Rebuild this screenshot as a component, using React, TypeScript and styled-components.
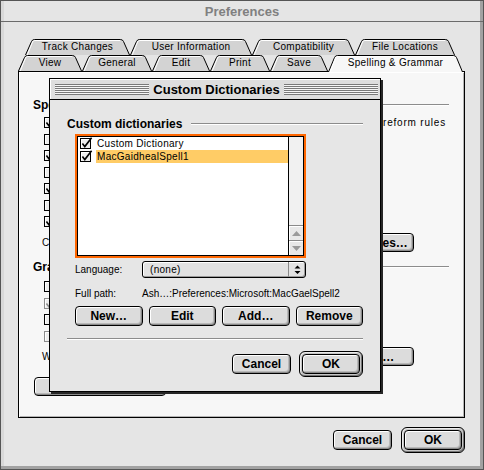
import React from 'react';
import styled, { createGlobalStyle } from 'styled-components';

const SYSTEM = `'Liberation Sans', Arial, sans-serif`;
const PANEL = '#f7f7f7';
const DISABLED = '#8c8c8c';

const GlobalStyle = createGlobalStyle`
  * { box-sizing: border-box; }
  html, body { margin: 0; padding: 0; }
  body { background: #ffffff; font-family: ${SYSTEM}; color: #000; }
`;

const Window = styled.div`
  position: relative;
  width: 484px;
  height: 470px;
  display: flex;
  flex-direction: column;
  background: #e5e5e5;
  border: 1px solid #555;
  box-shadow: inset -3px -3px 0 #a2a2a2, inset 3px 0 0 #d8d8d8;
`;

const TitleBar = styled.div`
  flex: none;
  height: 21px;
  display: flex;
  align-items: center;
  justify-content: center;
  border-bottom: 1px solid #6b6b6b;
  font: bold 13px ${SYSTEM};
  color: #808080;
`;

const Body = styled.div`
  display: flex;
  flex-direction: column;
  padding: 17px 0 0 17px;
`;

const TabRow = styled.div<{ $indent: number }>`
  display: flex;
  height: 16px;
  margin-left: ${p => p.$indent}px;
`;

const TabItem = styled.div<{ $w: number; $selected?: boolean }>`
  display: grid;
  width: ${p => p.$w}px;
  height: ${p => (p.$selected ? 17 : 16)}px;
  position: relative;
  z-index: ${p => (p.$selected ? 2 : 1)};

  & > * {
    grid-area: 1 / 1;
  }
`;

const TabSvg = styled.svg`
  display: block;
`;

const TabLabel = styled.span<{ $selected?: boolean }>`
  align-self: center;
  justify-self: center;
  font-size: 10px;
  line-height: 12px;
  letter-spacing: 0.3px;
  padding-bottom: ${p => (p.$selected ? 1 : 0)}px;
  white-space: nowrap;
`;

const Panel = styled.div`
  width: 447px;
  height: 347px;
  display: flex;
  flex-direction: column;
  padding: 26px 15px 0 14px;
  background: ${PANEL};
  border: 1px solid #000;
  box-shadow: inset 1px 1px 0 #fff, inset -1px -1px 0 #b4b4b4;
`;

const SectionHeader = styled.div<{ $gap?: number }>`
  display: flex;
  align-items: center;
  height: 14px;
  margin-top: ${p => p.$gap ?? 0}px;
`;

const SectionTitle = styled.span`
  font: bold 12px ${SYSTEM};
  white-space: nowrap;
`;

const Rule = styled.div<{ $inset?: number }>`
  flex: 1;
  height: 2px;
  margin-left: ${p => p.$inset ?? 6}px;
  border-top: 1px solid #8c8c8c;
  border-bottom: 1px solid #fff;
`;

const Options = styled.div<{ $gap: number }>`
  display: flex;
  flex-direction: column;
  margin-top: ${p => p.$gap}px;
  padding-left: 11px;
`;

const Option = styled.div<{ $disabled?: boolean }>`
  display: flex;
  align-items: center;
  gap: 5px;
  height: 16.5px;
  font-size: 10px;
  white-space: nowrap;
  color: ${p => (p.$disabled ? DISABLED : '#000')};
`;

const SideOption = styled.div`
  display: flex;
  align-items: center;
  gap: 5px;
  margin-left: auto;
  padding-right: 3px;
  letter-spacing: 0.8px;
`;

const FieldRow = styled.div<{ $gap: number }>`
  display: flex;
  align-items: center;
  height: 20px;
  margin-top: ${p => p.$gap}px;
  padding-left: 9px;
  font-size: 10px;
`;

const FieldLabel = styled.span<{ $w?: number }>`
  flex: none;
  width: ${p => (p.$w ? `${p.$w}px` : 'auto')};
  font-size: 10px;
  white-space: nowrap;
`;

const Button = styled.button<{ $w: number; $h?: number }>`
  flex: none;
  width: ${p => p.$w}px;
  height: ${p => p.$h ?? 20}px;
  padding: 0;
  border: 1px solid #000;
  border-radius: 4px;
  background: #dcdcdc;
  box-shadow: inset 1px 1px 0 #fff, inset -1px -1px 0 #8a8a8a,
    inset -2px -2px 0 #b8b8b8;
  font: bold 12px ${SYSTEM};
  color: #000;
  white-space: nowrap;
  overflow: hidden;
`;

const DefaultRing = styled.div`
  flex: none;
  padding: 2px;
  border: 1px solid #000;
  border-radius: 6px;
  background: #c6c6c6;
  box-shadow: inset 1px 1px 0 #ececec, inset -1px -1px 0 #777;
`;

const SideButton = styled(Button)`
  margin-left: auto;
  margin-right: 35px;
`;

const WideButton = styled(Button)`
  margin: 10.5px 0 0 1px;
`;

const Popup = styled.div<{ $w: number; $h?: number }>`
  flex: none;
  display: flex;
  width: ${p => p.$w}px;
  height: ${p => p.$h ?? 17}px;
  border: 1px solid #000;
  border-radius: 3px;
  background: #e2e2e2;
  box-shadow: inset 1px 1px 0 #fff, inset -1px -1px 0 #9a9a9a;
`;

const PopupValue = styled.span`
  flex: 1;
  display: flex;
  align-items: center;
  padding-left: 7px;
  font-size: 10px;
  letter-spacing: 0.3px;
  white-space: nowrap;
  overflow: hidden;
`;

const PopupArrowBox = styled.span`
  flex: none;
  width: 17px;
  display: flex;
  align-items: center;
  justify-content: center;
  border-left: 1px solid #8a8a8a;
`;

const Footer = styled.div`
  width: 447px;
  height: 26px;
  margin-top: 9px;
  display: flex;
  align-items: center;
  justify-content: flex-end;
  gap: 9px;
`;

/* movable modal dialog */

const Dialog = styled.div`
  position: absolute;
  left: 48px;
  top: 77px;
  width: 332px;
  height: 314px;
  display: flex;
  flex-direction: column;
  background: #e6e6e6;
  border: 1px solid #000;
  box-shadow: 2px 2px 0 #262626;
`;

const DialogTitleBar = styled.div`
  flex: none;
  height: 21px;
  display: flex;
  align-items: center;
  gap: 4px;
  padding: 0 2px 0 5px;
  background: #dedede;
  border-bottom: 1px solid #000;
  box-shadow: inset 1px 1px 0 #fff;
`;

const Stripes = styled.div`
  flex: 1;
  height: 11px;
  background: repeating-linear-gradient(
    to bottom,
    #7a7a7a 0 1px,
    #f6f6f6 1px 2px
  );
`;

const DialogTitle = styled.span`
  font: bold 13px ${SYSTEM};
  white-space: nowrap;
`;

const DialogBody = styled.div`
  flex: 1;
  display: flex;
  flex-direction: column;
  padding: 17px 17px 0;
`;

const Indented = styled.div`
  display: flex;
  flex-direction: column;
  padding-left: 8px;
`;

const FocusRing = styled.div`
  width: 231px;
  height: 124px;
  margin-top: 3px;
  border: 2px solid #ff6600;
`;

const ListBox = styled.div`
  height: 100%;
  display: flex;
  background: #fff;
  border: 1px solid #000;
`;

const ListRows = styled.div`
  flex: 1;
  display: flex;
  flex-direction: column;
`;

const ListRow = styled.div`
  display: flex;
  align-items: center;
  gap: 3px;
  height: 13px;
  padding-left: 2px;
`;

const ListLabel = styled.span<{ $selected?: boolean }>`
  flex: 1;
  height: 13px;
  line-height: 13px;
  padding-left: 1px;
  font-size: 10px;
  letter-spacing: 0.3px;
  background: ${p => (p.$selected ? '#ffcc66' : 'transparent')};
  white-space: nowrap;
`;

const ScrollTrack = styled.div`
  flex: none;
  width: 15px;
  display: flex;
  flex-direction: column;
  justify-content: flex-end;
  border-left: 1px solid #000;
  background: #f1f1f1;
`;

const ScrollArrow = styled.div`
  height: 15px;
  display: flex;
  align-items: center;
  justify-content: center;
  border-top: 1px solid #8a8a8a;
  background: #e8e8e8;
  box-shadow: inset 1px 1px 0 #fff;
`;

const DialogField = styled.div<{ $gap: number; $h: number }>`
  display: flex;
  align-items: center;
  height: ${p => p.$h}px;
  margin-top: ${p => p.$gap}px;
`;

const PathText = styled.span`
  font-size: 10px;
  white-space: nowrap;
`;

const ButtonGrid = styled.div`
  display: grid;
  grid-template-columns: repeat(4, 1fr);
  gap: 6px;
  margin-top: 5px;
`;

const Separator = styled.div`
  height: 2px;
  margin-top: 12px;
  border-top: 1px solid #8c8c8c;
  border-bottom: 1px solid #fff;
`;

const DialogActions = styled.div`
  display: flex;
  align-items: center;
  justify-content: flex-end;
  gap: 8px;
  height: 26px;
  margin-top: 11px;
`;

const GridButton = styled(Button)`
  width: auto;
`;

const CheckBox = ({ checked, disabled }: { checked?: boolean; disabled?: boolean }) => {
  const ink = disabled ? DISABLED : '#000';
  return (
    <svg width="13" height="13" viewBox="0 0 13 13" style={{ flex: 'none', display: 'block' }}>
      <rect x="0.5" y="1.5" width="10" height="10" fill="#eeeeee" stroke={ink} />
      <path d="M1.5 10.5 V2.5 H9.5" fill="none" stroke="#fff" />
      {checked && (
        <path d="M2.4 6.6 L4.8 9.6 L11.6 0.8" fill="none" stroke={ink} strokeWidth="1.6" />
      )}
    </svg>
  );
};

const TabShape = ({ w, h, selected }: { w: number; h: number; selected?: boolean }) => {
  const outline = `M0.5 ${h} L6.5 2.5 Q7.3 0.5 9.5 0.5 H${w - 9.5} Q${w - 7.3} 0.5 ${w - 6.5} 2.5 L${w - 0.5} ${h}`;
  const shine = `M2.2 ${h} L7.6 3 Q8.2 1.5 9.8 1.5 H${w - 10}`;
  return (
    <TabSvg width={w} height={h} viewBox={`0 0 ${w} ${h}`}>
      <path d={outline} fill={selected ? PANEL : '#d3d3d3'} stroke="#000" />
      <path d={shine} fill="none" stroke="#fff" />
    </TabSvg>
  );
};

type TabSpec = { label: string; width: number; selected?: boolean };

const backTabs: TabSpec[] = [
  { label: 'Track Changes', width: 105 },
  { label: 'User Information', width: 122 },
  { label: 'Compatibility', width: 103 },
  { label: 'File Locations', width: 100 },
];

const frontTabs: TabSpec[] = [
  { label: 'View', width: 64 },
  { label: 'General', width: 70 },
  { label: 'Edit', width: 58 },
  { label: 'Print', width: 60 },
  { label: 'Save', width: 58 },
  { label: 'Spelling & Grammar', width: 135, selected: true },
];

const Tabs = ({ tabs, indent }: { tabs: TabSpec[]; indent: number }) => (
  <TabRow $indent={indent}>
    {tabs.map(t => (
      <TabItem key={t.label} $w={t.width} $selected={t.selected}>
        <TabShape w={t.width} h={t.selected ? 17 : 16} selected={t.selected} />
        <TabLabel $selected={t.selected}>{t.label}</TabLabel>
      </TabItem>
    ))}
  </TabRow>
);

const PopupArrows = () => (
  <svg width="7" height="10" viewBox="0 0 7 10" style={{ display: 'block' }}>
    <path d="M3.5 0.5 L6.5 3.5 H0.5 Z M0.5 6 H6.5 L3.5 9 Z" fill="#000" />
  </svg>
);

const ScrollGlyph = ({ up }: { up?: boolean }) => (
  <svg width="9" height="5" viewBox="0 0 9 5" style={{ display: 'block' }}>
    <path d={up ? 'M4.5 0 L9 5 H0 Z' : 'M0 0 H9 L4.5 5 Z'} fill="#9a9a9a" />
  </svg>
);

const spellingOptions = [
  { label: 'Check spelling as you type', checked: true },
  { label: 'Hide spelling errors in this document' },
  { label: 'Always suggest corrections', checked: true },
  { label: 'Suggest from main dictionary only' },
  { label: 'Ignore words in UPPERCASE', checked: true },
  { label: 'Ignore words with numbers' },
  { label: 'Ignore Internet and file addresses', checked: true },
];

const grammarOptions = [
  { label: 'Check grammar as you type' },
  { label: 'Hide grammatical errors in this document', checked: true, disabled: true },
  { label: 'Check grammar with spelling' },
  { label: 'Show readability statistics', disabled: true },
];

const dictionaries = [
  { name: 'Custom Dictionary', checked: true },
  { name: 'MacGaidhealSpell1', checked: true, selected: true },
];

export default function App() {
  return (
    <>
      <GlobalStyle />
      <Window>
        <TitleBar>Preferences</TitleBar>
        <Body>
          <Tabs tabs={backTabs} indent={7} />
          <Tabs tabs={frontTabs} indent={0} />
          <Panel>
            <SectionHeader>
              <SectionTitle>Spelling</SectionTitle>
              <Rule />
            </SectionHeader>
            <Options $gap={2.5}>
              {spellingOptions.map((o, i) => (
                <Option key={o.label}>
                  <CheckBox checked={o.checked} />
                  <span>{o.label}</span>
                  {i === 0 && (
                    <SideOption>
                      <CheckBox />
                      <span>Use German post-reform rules</span>
                    </SideOption>
                  )}
                </Option>
              ))}
            </Options>
            <FieldRow $gap={2.5}>
              <FieldLabel $w={92}>Custom dictionary:</FieldLabel>
              <Popup $w={150}>
                <PopupValue>Custom Dictionary</PopupValue>
                <PopupArrowBox>
                  <PopupArrows />
                </PopupArrowBox>
              </Popup>
              <SideButton $w={93} $h={19}>Dictionaries…</SideButton>
            </FieldRow>
            <SectionHeader $gap={7}>
              <SectionTitle>Grammar</SectionTitle>
              <Rule />
            </SectionHeader>
            <Options $gap={5}>
              {grammarOptions.map(o => (
                <Option key={o.label} $disabled={o.disabled}>
                  <CheckBox checked={o.checked} disabled={o.disabled} />
                  <span>{o.label}</span>
                </Option>
              ))}
            </Options>
            <FieldRow $gap={2}>
              <FieldLabel $w={92}>Writing style:</FieldLabel>
              <Popup $w={150}>
                <PopupValue>Standard</PopupValue>
                <PopupArrowBox>
                  <PopupArrows />
                </PopupArrowBox>
              </Popup>
              <SideButton $w={99} $h={19}>Settings…</SideButton>
            </FieldRow>
            <WideButton $w={132} $h={19}>Check Document</WideButton>
          </Panel>
          <Footer>
            <Button $w={59}>Cancel</Button>
            <DefaultRing>
              <Button $w={58}>OK</Button>
            </DefaultRing>
          </Footer>
        </Body>

        <Dialog>
          <DialogTitleBar>
            <Stripes />
            <DialogTitle>Custom Dictionaries</DialogTitle>
            <Stripes />
          </DialogTitleBar>
          <DialogBody>
            <SectionHeader>
              <SectionTitle>Custom dictionaries</SectionTitle>
              <Rule $inset={9} />
            </SectionHeader>
            <Indented>
              <FocusRing>
                <ListBox>
                  <ListRows>
                    {dictionaries.map(d => (
                      <ListRow key={d.name}>
                        <CheckBox checked={d.checked} />
                        <ListLabel $selected={d.selected}>{d.name}</ListLabel>
                      </ListRow>
                    ))}
                  </ListRows>
                  <ScrollTrack>
                    <ScrollArrow>
                      <ScrollGlyph up />
                    </ScrollArrow>
                    <ScrollArrow>
                      <ScrollGlyph />
                    </ScrollArrow>
                  </ScrollTrack>
                </ListBox>
              </FocusRing>
              <DialogField $gap={3} $h={17}>
                <FieldLabel $w={67}>Language:</FieldLabel>
                <Popup $w={164}>
                  <PopupValue>(none)</PopupValue>
                  <PopupArrowBox>
                    <PopupArrows />
                  </PopupArrowBox>
                </Popup>
              </DialogField>
              <DialogField $gap={7} $h={16}>
                <FieldLabel $w={67}>Full path:</FieldLabel>
                <PathText>Ash…:Preferences:Microsoft:MacGaelSpell2</PathText>
              </DialogField>
              <ButtonGrid>
                <GridButton $w={0}>New…</GridButton>
                <GridButton $w={0}>Edit</GridButton>
                <GridButton $w={0}>Add…</GridButton>
                <GridButton $w={0}>Remove</GridButton>
              </ButtonGrid>
            </Indented>
            <Separator />
            <DialogActions>
              <Button $w={59}>Cancel</Button>
              <DefaultRing>
                <Button $w={58}>OK</Button>
              </DefaultRing>
            </DialogActions>
          </DialogBody>
        </Dialog>
      </Window>
    </>
  );
}
